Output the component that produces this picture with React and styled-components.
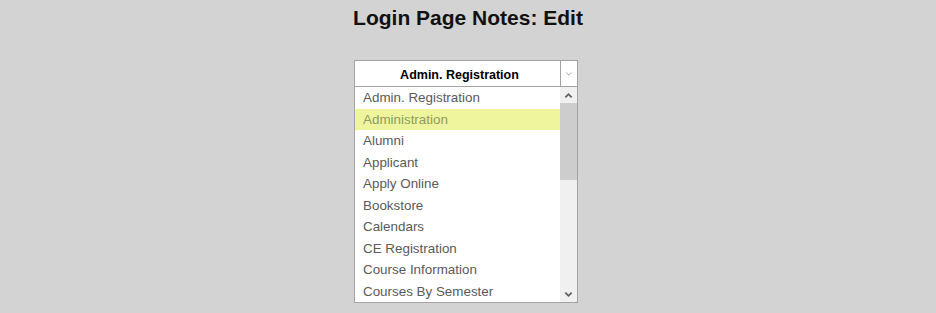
import React from 'react';
import styled, { createGlobalStyle } from 'styled-components';

const GlobalStyle = createGlobalStyle`
  body {
    margin: 0;
    background: #d3d3d3;
    font-family: "Liberation Sans", Arial, sans-serif;
  }
`

const Page = styled.div`
  display: flex;
  flex-direction: column;
  align-items: center;
  padding-top: 5px;
`
const Title = styled.h1`
  margin: 0 0 29px 0;
  font-size: 21px;
  line-height: 26px;
  font-weight: bold;
  color: #111;
`
const Picker = styled.div`
  width: 224px;
  margin-left: -4px;
`
const Header = styled.div`
  display: flex;
  height: 25px;
  background: white;
  border: 1px solid #a3a3a3;
`
const Current = styled.div`
  flex: 1;
  display: flex;
  align-items: center;
  justify-content: center;
  font-size: 12.5px;
  font-weight: bold;
  color: #000;
  padding-top: 2px;
  padding-left: 4px;
`
const ArrowCell = styled.div`
  width: 16px;
  border-left: 1px solid #a3a3a3;
  display: flex;
  align-items: center;
  justify-content: center;
`
const ListBox = styled.div`
  display: flex;
  height: 215px;
  background: white;
  border: 1px solid #a3a3a3;
  border-top: none;
`
const Items = styled.ul`
  flex: 1;
  margin: 0;
  padding: 0;
  list-style: none;
`
const Item = styled.li`
  height: 21.5px;
  line-height: 22px;
  padding-left: 8px;
  font-size: 13.4px;
  color: ${p => p.active ? '#8e9a66' : '#5a5a5a'};
  background: ${p => p.active ? '#eff59c' : 'white'};
`
const Scrollbar = styled.div`
  width: 17px;
  background: #f0f0f0;
  display: flex;
  flex-direction: column;
`
const ScrollButton = styled.div`
  height: 16px;
  display: flex;
  align-items: center;
  justify-content: center;
`
const Track = styled.div`
  flex: 1;
`
const Thumb = styled.div`
  height: 77px;
  background: #cdcdcd;
`

const Chevron = ({ up, color = '#606060', size = 9, weight = 2 }) => (
  <svg width={size} height={size} viewBox="0 0 10 10">
    <path d={up ? 'M1.5 7 L5 3.5 L8.5 7' : 'M1.5 3 L5 6.5 L8.5 3'} fill="none" stroke={color} strokeWidth={weight} />
  </svg>
)

const options = [
  'Admin. Registration',
  'Administration',
  'Alumni',
  'Applicant',
  'Apply Online',
  'Bookstore',
  'Calendars',
  'CE Registration',
  'Course Information',
  'Courses By Semester',
]

export default function App() {
  return (
    <Page>
      <GlobalStyle />
      <Title>Login Page Notes: Edit</Title>
      <Picker>
        <Header>
          <Current>Admin. Registration</Current>
          <ArrowCell><Chevron color="#a8a8a8" size={8} weight={1.2} /></ArrowCell>
        </Header>
        <ListBox>
          <Items>
            {options.map((o, i) => (
              <Item key={o} active={i === 1}>{o}</Item>
            ))}
          </Items>
          <Scrollbar>
            <ScrollButton><Chevron up /></ScrollButton>
            <Track><Thumb /></Track>
            <ScrollButton><Chevron /></ScrollButton>
          </Scrollbar>
        </ListBox>
      </Picker>
    </Page>
  );
}
